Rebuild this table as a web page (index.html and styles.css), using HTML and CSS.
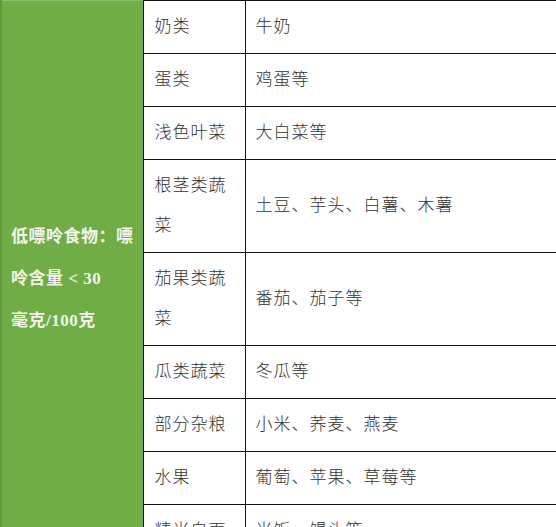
FILE: index.html
```html
<!DOCTYPE html>
<html lang="zh-CN">
<head>
<meta charset="utf-8">
<link rel="stylesheet" href="styles.css">
</head>
<body>
<table class="purine">
  <colgroup>
    <col class="c-group">
    <col class="c-cat">
    <col class="c-ex">
  </colgroup>
  <tbody>
    <tr>
      <td class="group" rowspan="9">低嘌呤食物：嘌<br>呤含量 &lt; 30<br>毫克/100克</td>
      <td class="cat">奶类</td>
      <td class="ex">牛奶</td>
    </tr>
    <tr><td class="cat">蛋类</td><td class="ex">鸡蛋等</td></tr>
    <tr><td class="cat">浅色叶菜</td><td class="ex">大白菜等</td></tr>
    <tr><td class="cat">根茎类蔬<br>菜</td><td class="ex">土豆、芋头、白薯、木薯</td></tr>
    <tr><td class="cat">茄果类蔬<br>菜</td><td class="ex">番茄、茄子等</td></tr>
    <tr><td class="cat">瓜类蔬菜</td><td class="ex">冬瓜等</td></tr>
    <tr><td class="cat">部分杂粮</td><td class="ex">小米、荞麦、燕麦</td></tr>
    <tr><td class="cat">水果</td><td class="ex">葡萄、苹果、草莓等</td></tr>
    <tr><td class="cat">精米白面</td><td class="ex">米饭、馒头等</td></tr>
  </tbody>
</table>
</body>
</html>
```

FILE: styles.css
```css
html, body {
  margin: 0;
  padding: 0;
  overflow: hidden;
  background: #ffffff;
}

.purine {
  border-collapse: collapse;
  table-layout: fixed;
  width: 640px;
  font-family: "Liberation Serif", "Noto Sans CJK SC", serif;
  font-size: 17px;
  color: #333333;
}

.c-group { width: 142px; }
.c-cat { width: 102px; }
.c-ex { width: 396px; }

.purine td {
  border: 1px solid #111111;
  padding: 6px 10px;
  line-height: 40px;
  vertical-align: middle;
  font-weight: 300;
  letter-spacing: 1px;
  white-space: nowrap;
}

.purine td.group {
  background: #70ad47;
  color: #f4f4ec;
  font-weight: 700;
  line-height: 42px;
  padding: 0 2px 0 9px;
  border-left: 2px solid #5f9a3a;
  border-top: 1px solid #8cbf69;
  letter-spacing: 0.5px;
}

.purine td.cat {
  padding-left: 11px;
}

.purine td.ex {
  padding-left: 10px;
}
```
